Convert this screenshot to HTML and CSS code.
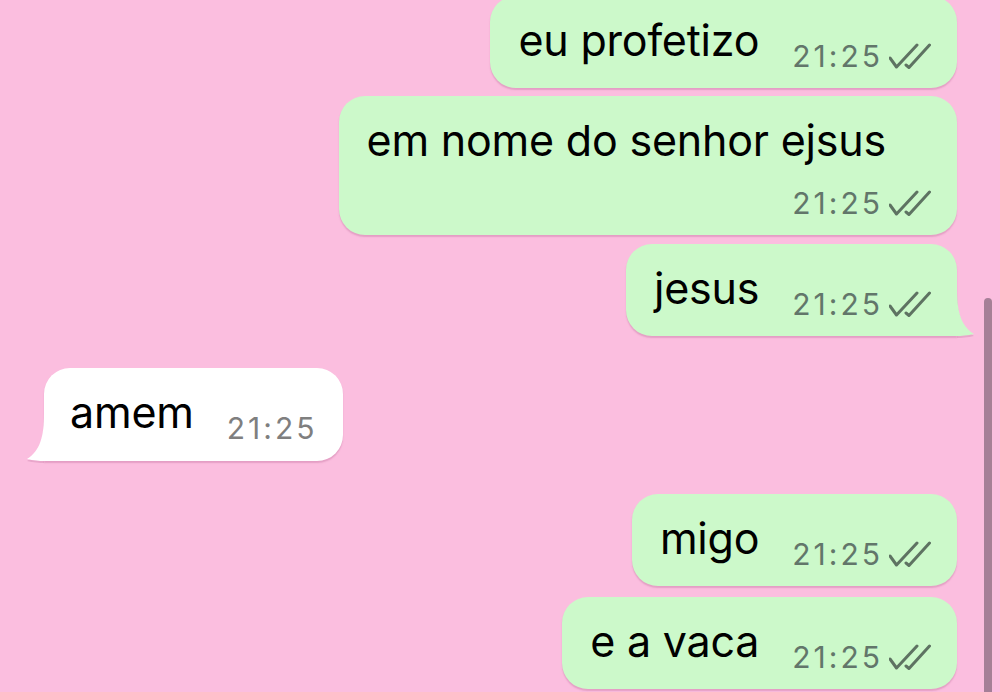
FILE: index.html
```html
<!DOCTYPE html>
<html lang="pt">
<head>
<meta charset="utf-8">
<title>Chat</title>
<link rel="stylesheet" href="styles.css">
</head>
<body>
<div class="chat">
  <div class="row out first">
    <div class="bubble out-b">
      <span class="text">eu profetizo</span>
      <span class="meta"><span class="time">21:25</span><svg class="ticks" viewBox="0 0 42 26" width="42" height="26"><path d="M1 15 L7.5 24 L28 2 M17 22 L20 24.5 L40.5 2" fill="none" stroke="currentColor" stroke-width="3" stroke-linecap="round" stroke-linejoin="round"/></svg></span>
    </div>
  </div>
  <div class="row out gap8">
    <div class="bubble out-b wrap">
      <span class="text">em nome do senhor ejsus</span>
      <span class="meta"><span class="time">21:25</span><svg class="ticks" viewBox="0 0 42 26" width="42" height="26"><path d="M1 15 L7.5 24 L28 2 M17 22 L20 24.5 L40.5 2" fill="none" stroke="currentColor" stroke-width="3" stroke-linecap="round" stroke-linejoin="round"/></svg></span>
    </div>
  </div>
  <div class="row out gap9">
    <div class="bubble out-b tail-r">
      <span class="text">jesus</span>
      <span class="meta"><span class="time">21:25</span><svg class="ticks" viewBox="0 0 42 26" width="42" height="26"><path d="M1 15 L7.5 24 L28 2 M17 22 L20 24.5 L40.5 2" fill="none" stroke="currentColor" stroke-width="3" stroke-linecap="round" stroke-linejoin="round"/></svg></span>
      <svg class="tail tail-out" viewBox="0 0 46 48" width="46" height="48"><path d="M27 0 C27 24 31 38 44 46 C38 47.5 31 48 27 48 Z"/></svg>
    </div>
  </div>
  <div class="row in gap32">
    <div class="bubble in-b tail-l">
      <span class="text">amem</span>
      <span class="meta"><span class="time">21:25</span></span>
      <svg class="tail tail-in" viewBox="0 0 46 48" width="46" height="48"><path d="M19 0 C19 24 15 38 2 46 C8 47.5 15 48 19 48 Z"/></svg>
    </div>
  </div>
  <div class="row out gap33">
    <div class="bubble out-b">
      <span class="text">migo</span>
      <span class="meta"><span class="time">21:25</span><svg class="ticks" viewBox="0 0 42 26" width="42" height="26"><path d="M1 15 L7.5 24 L28 2 M17 22 L20 24.5 L40.5 2" fill="none" stroke="currentColor" stroke-width="3" stroke-linecap="round" stroke-linejoin="round"/></svg></span>
    </div>
  </div>
  <div class="row out gap11">
    <div class="bubble out-b">
      <span class="text">e a vaca</span>
      <span class="meta"><span class="time">21:25</span><svg class="ticks" viewBox="0 0 42 26" width="42" height="26"><path d="M1 15 L7.5 24 L28 2 M17 22 L20 24.5 L40.5 2" fill="none" stroke="currentColor" stroke-width="3" stroke-linecap="round" stroke-linejoin="round"/></svg></span>
    </div>
  </div>
</div>
<div class="scrollbar"></div>
</body>
</html>
```
FILE: styles.css
```css
html, body {
  margin: 0;
  padding: 0;
  height: 100%;
  overflow: hidden;
}
body {
  background: #fbbedf;
  font-family: "Inter", "Noto Sans", sans-serif;
  color: #000;
  position: relative;
}
.chat {
  display: flex;
  flex-direction: column;
  padding: 0 43px 0 44px;
}
.row {
  display: flex;
}
.row.out { justify-content: flex-end; }
.row.in { justify-content: flex-start; }
.first { margin-top: -4px; }
.gap8 { margin-top: 8px; }
.gap9 { margin-top: 9px; }
.gap11 { margin-top: 11px; }
.gap32 { margin-top: 32px; }
.gap33 { margin-top: 33px; }

.bubble {
  position: relative;
  display: flex;
  align-items: flex-end;
  border-radius: 26px;
  padding: 18px 26px 14px 28px;
  box-shadow: 0 2px 1.5px rgba(170, 80, 130, 0.28);
}
.bubble.out-b { background: #ccf9ca; }
.bubble.in-b { background: #ffffff; padding: 18px 26px 15px 26px; }
.bubble.wrap {
  flex-direction: column;
  align-items: flex-start;
}
.text {
  font-size: 43px;
  line-height: 52px;
  letter-spacing: -0.2px;
  margin-bottom: 8px;
  white-space: nowrap;
}
.wrap .text {
  margin-bottom: 19px;
  margin-right: 45px;
}
.meta {
  display: flex;
  align-items: center;
  margin-left: 33px;
}
.wrap .meta {
  align-self: flex-end;
}
.time {
  font-size: 30px;
  line-height: 36px;
  letter-spacing: 3px;
  color: #62766a;
}
.in-b .time { color: #7f7f7f; }
.ticks {
  display: block;
  margin-left: 6px;
  color: #5e7362;
}
.tail-r { border-bottom-right-radius: 0; }
.tail-l { border-bottom-left-radius: 0; }
.tail {
  position: absolute;
  bottom: 0;
}
.tail-out {
  right: -19px;
  fill: #ccf9ca;
  filter: drop-shadow(0 2px 0 rgba(170, 80, 130, 0.22));
}
.tail-in {
  left: -19px;
  fill: #ffffff;
  filter: drop-shadow(0 2px 0 rgba(170, 80, 130, 0.22));
}
.scrollbar {
  position: absolute;
  right: 8px;
  top: 298px;
  width: 8px;
  height: 420px;
  border-radius: 4px;
  background: #a57f97;
}
```
